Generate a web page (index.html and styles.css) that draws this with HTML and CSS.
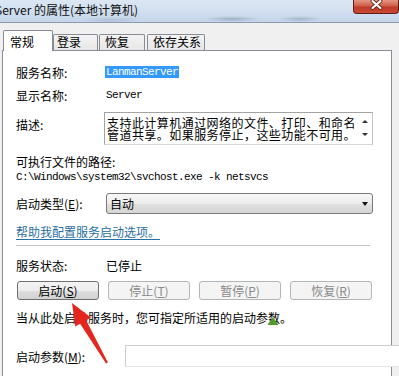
FILE: index.html
```html
<!DOCTYPE html>
<html lang="zh-CN">
<head>
<meta charset="utf-8">
<title>Server 的属性</title>
<link rel="stylesheet" href="styles.css">
</head>
<body>
<div class="titlebar">
  <span class="title">Server 的属性(本地计算机)</span>
  <span class="close"><svg width="46" height="13" viewBox="0 0 46 13"><path d="M20 1 L28 8 M28 1 L20 8" stroke="#6a2418" stroke-width="4" stroke-linecap="round"/><path d="M20 1 L28 8 M28 1 L20 8" stroke="#fff" stroke-width="2.2" stroke-linecap="round"/></svg></span>
</div>
<div class="tabs">
  <div class="tab active">常规</div>
  <div class="tab t2">登录</div>
  <div class="tab t3">恢复</div>
  <div class="tab t4">依存关系</div>
</div>
<div class="panel">
  <div class="row r-name"><span class="label">服务名称:</span><span class="mono sel">LanmanServer</span></div>
  <div class="row r-disp"><span class="label">显示名称:</span><span class="mono">Server</span></div>
  <div class="row r-desc">
    <span class="label desc-label">描述:</span>
    <div class="textarea">
      <div class="ta-text"><div class="ta-line">支持此计算机通过网络的文件、打印、和命名</div><div class="ta-line">管道共享。如果服务停止，这些功能不可用。</div></div>
      <div class="ta-scroll"><span class="up"></span><span class="down"></span></div>
    </div>
  </div>
  <div class="path-label">可执行文件的路径:</div>
  <div class="mono path">C:\Windows\system32\svchost.exe -k netsvcs</div>
  <div class="row r-type">
    <span class="label">启动类型(<u>E</u>):</span>
    <div class="select"><span>自动</span><span class="caret"></span></div>
  </div>
  <a class="link">帮助我配置服务启动选项。</a>
  <div class="sep"></div>
  <div class="row r-status"><span class="label">服务状态:</span><span>已停止</span></div>
  <div class="buttons">
    <div class="btn">启动(<u>S</u>)</div>
    <div class="btn disabled">停止(<u>T</u>)</div>
    <div class="btn disabled">暂停(<u>P</u>)</div>
    <div class="btn disabled">恢复(<u>R</u>)</div>
  </div>
  <div class="hint">当从此处启动服务时，您可指定所适用的启动参数。</div>
  <div class="row r-param"><span class="label plabel">启动参数(<u>M</u>):</span><div class="input"></div></div>
</div>
<svg class="overlay" width="399" height="376" viewBox="0 0 399 376">
  <polygon points="273,317 267.5,325 278.5,325" fill="#4f9a2c"/>
  <polygon points="72,303 90.9,317.5 86.1,320.2 107.9,362.5 106.1,363.5 80.1,323.8 75.3,326.5" fill="#e5261f"/>
</svg>
</body>
</html>
```
FILE: styles.css
```css
* { box-sizing: border-box; margin: 0; padding: 0; }
html, body { width: 399px; height: 376px; overflow: hidden; }
body {
  position: relative;
  background: #f0f0f0;
  font-family: "Noto Sans CJK SC", "Microsoft YaHei", sans-serif;
  font-size: 12px;
  color: #000;
}
u { text-decoration: underline; text-underline-offset: 1px; text-decoration-thickness: 1px; }

.titlebar {
  height: 23px;
  display: flex;
  align-items: flex-start;
  border-bottom: 1px solid #8e9bab;
  background:
    radial-gradient(ellipse 28px 3px at 232px 19px, rgba(80,100,130,.35), transparent),
    radial-gradient(ellipse 22px 3px at 300px 19px, rgba(80,100,130,.3), transparent),
    radial-gradient(ellipse 30px 3px at 110px 20px, rgba(80,100,130,.2), transparent),
    linear-gradient(#dce7f4, #c5d6ea);
}
.title { margin-left: -5px; line-height: 20px; white-space: nowrap; color: #111; }
.close {
  margin-left: auto;
  width: 46px;
  height: 14px;
  border: 1px solid #5c2018;
  border-top: none;
  border-radius: 0 0 4px 4px;
  background: linear-gradient(#e49684, #d0604a 45%, #c03a28 55%, #c94a34);
  display: flex;
}
.close svg { display: block; margin-left: -1px; }

.tabs { height: 27px; display: flex; align-items: flex-end; padding-left: 3px; }
.tab {
  height: 16px;
  line-height: 14px;
  border: 1px solid #898c95;
  border-bottom: none;
  border-radius: 2px 2px 0 0;
  background: linear-gradient(#f4f4f4, #e6e6e6);
  white-space: nowrap;
}
.tab.active {
  position: relative;
  z-index: 1;
  width: 50px;
  height: 21px;
  margin-bottom: -1px;
  padding: 3px 0 0 6px;
  line-height: 16px;
  background: #fff;
}
.t2 { width: 45px; padding-left: 3px; }
.t3 { width: 46px; margin-left: 1px; padding-left: 5px; }
.t4 { width: 58px; margin-left: 2px; padding-left: 5px; }

.panel {
  position: relative;
  z-index: 0;
  margin-left: 2px;
  width: 390px;
  height: 420px;
  background: #fff;
  border: 1px solid #898c95;
  padding: 11px 0 0 13px;
}

.row { display: flex; align-items: center; }
.label { width: 90px; flex: none; white-space: nowrap; }
.mono {
  font-family: "Liberation Mono", monospace;
  font-size: 11px;
  letter-spacing: -0.6px;
  white-space: nowrap;
}
.sel {
  margin-left: -1px;
  padding: 0 1px;
  line-height: 12px;
  background: #3399ff;
  color: #fff;
}
.r-name { height: 20px; }
.r-disp { height: 20px; margin-top: 3px; }
.r-desc { margin-top: 7px; height: 33px; align-items: flex-start; }
.desc-label { line-height: 20px; padding-top: 3px; }
.textarea {
  margin-left: -2px;
  width: 269px;
  height: 33px;
  border: 1px solid #a3a3a3;
  border-right-color: #c4c4c4;
  border-bottom-color: #d6d6d6;
  display: flex;
  background: #fff;
}
.ta-text {
  flex: 1;
  min-width: 0;
  padding: 4px 0 0 2px;
  letter-spacing: 0.45px;
  white-space: nowrap;
}
.ta-line { height: 12px; line-height: 12px; }
.ta-scroll {
  width: 12px;
  flex: none;
  display: flex;
  flex-direction: column;
  align-items: center;
  padding-top: 7px;
  padding-right: 2px;
  gap: 10px;
}
.up { width: 0; height: 0; border-left: 3px solid transparent; border-right: 3px solid transparent; border-bottom: 3px solid #333; }
.down { width: 0; height: 0; border-left: 3px solid transparent; border-right: 3px solid transparent; border-top: 3px solid #333; }

.path-label { margin-top: 9px; height: 16px; line-height: 16px; }
.path { height: 14px; line-height: 14px; }

.r-type { margin-top: 9px; height: 21px; }
.select {
  width: 267px;
  height: 21px;
  border: 1px solid #7a7a7a;
  border-radius: 3px;
  background: linear-gradient(#f7f7f7, #ececec 50%, #e0e0e0 50%, #d6d6d6);
  display: flex;
  align-items: center;
  padding-left: 3px;
}
.caret {
  margin-left: auto;
  margin-right: 4px;
  width: 0; height: 0;
  border-left: 3.5px solid transparent;
  border-right: 3.5px solid transparent;
  border-top: 4px solid #111;
}

.link {
  display: block;
  width: fit-content;
  margin-top: 10px;
  height: 16px;
  line-height: 16px;
  color: #2a6fa1;
  text-decoration: underline;
  text-underline-offset: 2px;
}
.sep { margin-top: 5px; width: 354px; height: 1px; background: #c3c3c3; }

.r-status { margin-top: 12px; height: 16px; line-height: 16px; }

.buttons { margin-top: 7px; margin-left: 1px; display: flex; gap: 9px; }
.btn {
  width: 82px;
  height: 19px;
  border: 1px solid #707070;
  border-radius: 3px;
  background: linear-gradient(#f4f4f4, #ececec 50%, #dfdfdf 50%, #d2d2d2);
  text-align: center;
  line-height: 17px;
  white-space: nowrap;
}
.btn.disabled {
  border-color: #b3b6b9;
  background: #f4f4f4;
  color: #8a8a8a;
}

.hint { margin-top: 10px; height: 16px; line-height: 16px; white-space: nowrap; }

.r-param { margin-top: 19px; height: 22px; }
.plabel { width: 109px; }
.input {
  width: 300px;
  height: 22px;
  flex: none;
  border: 1px solid #cfcfcf;
  border-bottom-color: #e4e4e4;
  background: #fff;
}

.overlay { position: absolute; left: 0; top: 0; pointer-events: none; }
```
